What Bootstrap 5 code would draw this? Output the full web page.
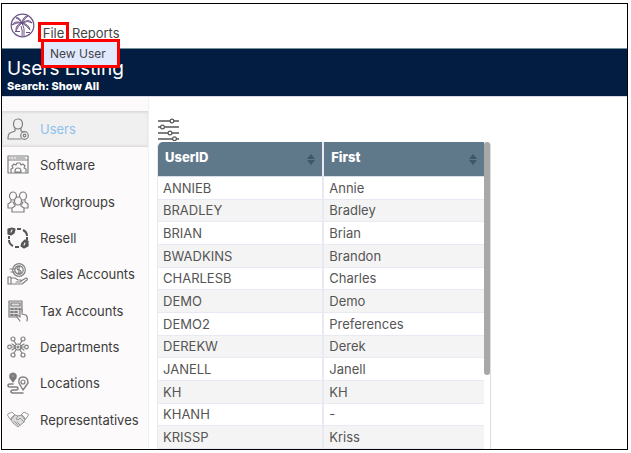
<!DOCTYPE html>
<html lang="en">
<head>
<meta charset="utf-8">
<meta name="viewport" content="width=device-width, initial-scale=1">
<title>Users Listing</title>
<link href="https://cdn.jsdelivr.net/npm/bootstrap@5.3.0/dist/css/bootstrap.min.css" rel="stylesheet">
<style>
body{font-family:Inter,"Open Sans",sans-serif;font-size:13px;line-height:16px;color:#333;background:#fff}
.page-shell{padding:3px 3px 3px 1px}
.app-frame{border:1px solid #000;background:#fff}
.top-bar{height:45px;padding:0 8px;border-bottom:1px solid #78909a}
.brand{margin-top:9px;width:25px;height:25px}
.menu-bar{margin:18px 0 0 3px;gap:3px}
.menu-bar button{font-size:13px;line-height:16px;color:#444;background:none;border:0;padding:3px 0}
.menu-bar .menu-open{border:3px solid #f00;padding:0 1px;height:20px;width:31px;text-align:center}
.file-menu{position:absolute;z-index:5;left:3px;top:17px;width:79px;height:29px;margin:0;padding:0;border:3px solid #f00;background:#e1e9ff}
.file-menu a{display:block;padding:4px 6px;font-size:12px;line-height:16px;color:#444;text-decoration:none;white-space:nowrap}
.title-band{height:48px;padding:10px 6px 0 5px;background:#021d41;color:#fff;border-bottom:1px solid #d5d9e6}
.title-band h1{font-size:19px;line-height:20px;font-weight:400;margin:0}
.title-band p{font-size:11px;line-height:14px;font-weight:800;margin:0}
.side-nav{width:147px;padding:14px 0 11px;background:#fcfafb;border-right:1px solid #f0f1f4}
.side-nav a{color:#3c3c3c;text-decoration:none;padding-left:5px;gap:11px;border-top:1px solid transparent;border-bottom:1px solid transparent}
.side-nav a.active{color:#8fc0ee;background:#f0f0f0;border-color:#ddd;box-shadow:inset 0 1px 2px #ddd,inset 0 -1px 2px #e4e4e4}
.side-nav svg{width:22px;height:22px;flex:none;fill:none;stroke:#808080;stroke-width:1.2;stroke-linecap:round;stroke-linejoin:round}
.side-nav .soft-icon{stroke:#999;stroke-width:1}
.content{padding:18px 8px 0;min-height:0}
.filter-button{border:0;background:none;padding:0;width:24px;height:27px;line-height:0;text-align:left}
.filter-button svg{display:block}
.grid-box{width:334px;max-width:100%;min-height:0;border-radius:5px 4px 0 0;border-left:1px solid #e9e9f3;border-right:1px solid #ddd}
.user-grid{height:100%;margin:0;table-layout:fixed;border-collapse:separate;border-spacing:0;color:#555;font-size:13px}
.user-grid th{height:35px;padding:8px 7px;background:#5f798b;color:#fff;font-weight:800;line-height:14px;vertical-align:top;border-bottom:1px solid #d8deea}
.user-grid th:first-child{width:51%;border-top-left-radius:5px}
.user-grid td{padding:0 5px;line-height:14px;vertical-align:middle;border-bottom:1px solid #e9e9f3}
.user-grid tr>:first-child{border-right:2px solid #e9e9f3}
.user-grid tbody tr:nth-child(even) td{background:#f4f4f4}
.user-grid th svg{margin-top:4px}
.scroll-track{width:6px;flex:none}
.scroll-thumb{height:76%;background:#a8a8a8;border-radius:3px}
</style>
<script src="https://cdn.jsdelivr.net/npm/bootstrap@5.3.0/dist/js/bootstrap.bundle.min.js"></script>
</head>
<body>
<div class="page-shell vh-100">
<div class="app-frame h-100 d-flex flex-column overflow-hidden">
<header class="top-bar d-flex align-items-start flex-shrink-0">
<svg class="brand" viewBox="0 0 25 25" fill="none" stroke="#6a5283" aria-label="Palm logo">
<circle cx="12.500" cy="12.500" r="11.300" stroke-width="1.200"/>
<path d="M12 10Q9 3 6 5Q9 6 12 10Q5 7 2 12Q7 9 12 10Q5 12 6 18Q8 13 12 10Q17 13 20 17Q19 11 12 10Q18 7 22 10Q19 5 12 10Q15 5 18 3Q13 3 12 10" fill="#6a5283" fill-opacity=".45" stroke-width=".9"/>
<path d="M12 10Q15 15 14 23M11 13Q13 18 12 23M5 18.500H10M16 19.500H20" stroke-width="1"/>
</svg>
<nav class="menu-bar d-flex position-relative" aria-label="Main menu">
<button type="button" class="menu-open" aria-expanded="true">File</button>
<button type="button">Reports</button>
<div class="file-menu"><a href="#">New User</a></div>
</nav>
</header>
<div class="title-band flex-shrink-0">
<h1>Users Listing</h1>
<p>Search: Show All</p>
</div>
<div class="d-flex flex-grow-1 overflow-hidden">
<nav class="side-nav d-flex flex-column flex-shrink-0" aria-label="Sections">
<a class="active d-flex align-items-center flex-fill" href="#"><svg viewBox="0 0 22 22"><path d="M11 1C8 1 6.500 3 6.500 6S8 11 11 11s4.500-2 4.500-5S14 1 11 1zM8 11v2l-5 2q-2 1-2 6h13M14 11v2l2 1"/><circle cx="17.500" cy="17.500" r="3.800"/><circle cx="17.500" cy="17.500" r="1.300"/></svg>Users</a>
<a class="d-flex align-items-center flex-fill" href="#"><svg viewBox="0 0 22 22"><path d="M1 2h20v17H1zM1 6h20M3 4h1M6 4h1M9 4h9M4 18v-3l2-1-1-2 2-2 2 1 1-2h3l1 2 2-1 2 2-1 2 2 1v3M8 18v-1q0-3 3-3t3 3v1z"/></svg>Software</a>
<a class="d-flex align-items-center flex-fill" href="#"><svg viewBox="0 0 22 22"><ellipse cx="6" cy="5" rx="3.500" ry="4"/><ellipse cx="16" cy="5" rx="3.500" ry="4"/><ellipse cx="11" cy="10" rx="3.500" ry="4" fill="#fcfafb"/><path d="M4 9v2l-3 2v4h4M18 9v2l3 2v4h-4M8 13v2l-3 2v4h12v-4l-3-2v-2M6 11l1 2M16 11l-1 2"/></svg>Workgroups</a>
<a class="d-flex align-items-center flex-fill" href="#"><svg viewBox="0 0 22 22"><g stroke="#555" stroke-width="2" stroke-linecap="butt"><path d="M10 2h4M16 3q4 2 4 6M20 10v3M12 20H8M6 19q-4-2-4-6M2 12V9"/></g><path d="M1 2l4-1 3 1-1 4-3 2-3-1zM15 16l3-3 3 1v5l-4 2-3-2z" fill="#555" stroke="#555"/><path d="M5 3l-1 2M18 16l-1 2" stroke="#eee"/></svg>Resell</a>
<a class="d-flex align-items-center flex-fill" href="#"><svg viewBox="0 0 22 22"><circle cx="12" cy="7" r="6.300"/><circle cx="12" cy="7" r="4.200"/><path d="M13 4q-3-1-3 1t2 2 2 2-3 1M12 3v8M3 6h5M4 9h5M1 14h3v7H1zM4 15h4l3 2h3q1 2-1 2H9M14 18l5-3q2 0 1 2l-5 4H4"/></svg>Sales Accounts</a>
<a class="d-flex align-items-center flex-fill" href="#"><svg viewBox="0 0 22 22"><path d="M11 17H2V1h13v10" fill="#ddd"/><path d="M4 3h9v3H4z"/><path d="M4 9h2M8 9h2M12 9h1M4 12h2M8 12h2M4 15h2M8 15h2" stroke-width="1.800"/><path d="M13 21l-3-4q0-2 2-1l1 1v-7q1-2 2 0v4l4 1q2 2 1 6" fill="#fcfafb"/></svg>Tax Accounts</a>
<a class="d-flex align-items-center flex-fill" href="#"><svg viewBox="0 0 22 22"><circle cx="11" cy="11" r="3"/><circle cx="11" cy="11" r="1"/><circle cx="6" cy="3" r="2"/><circle cx="16" cy="3" r="2"/><circle cx="2.500" cy="11" r="1.800"/><circle cx="19.500" cy="11" r="1.800"/><circle cx="6" cy="19" r="2"/><circle cx="16" cy="19" r="2"/><path d="M7 5l2 3M15 5l-2 3M4.500 11H8M14 11h3.500M9 14l-2 3M13 14l2 3M5 8l3 2M17 8l-3 2M5 14l3-2M17 14l-3-2"/></svg>Departments</a>
<a class="d-flex align-items-center flex-fill" href="#"><svg viewBox="0 0 22 22"><path d="M6 10L3 6q-1-5 3-5t3 5z" fill="#777"/><circle cx="6" cy="4" r="1.200" fill="#ddd"/><path d="M16 18l-4-7q-1-6 4-6t5 6z" stroke-width="1.400"/><circle cx="16" cy="10" r="2"/><path d="M6 12H3q-2 0-2 1.500T3 15h6q2 0 2 1.500T9 18H6q-2 0-2 1.500T6 21h10" stroke-width="1.500"/></svg>Locations</a>
<a class="d-flex align-items-center flex-fill" href="#"><svg class="soft-icon" viewBox="0 0 22 22"><path d="M5 8l3-2 3 1 4-1 3 3-1 4-6 5-5-4-2-3z" fill="#ddd"/><path d="M1 5l4-2 3 3-4 5-3-4zM21 5l-4-2-3 3 4 5 3-4zM11 7l-2 3 2 1 2-2 4 4M10 13l3 3M7 12l4 4"/></svg>Representatives</a>
</nav>
<main class="content d-flex flex-column flex-grow-1">
<button type="button" class="filter-button flex-shrink-0" aria-label="Filter options"><svg width="24" height="25" viewBox="0 0 24 25" fill="#fff" stroke="#555" stroke-width="1.200"><path d="M1 5h21M1 11h21M1 17h21M1 23h21" stroke-width="1.600"/><circle cx="15" cy="5" r="1.900"/><circle cx="5.500" cy="11" r="1.900"/><circle cx="13" cy="17" r="1.900"/><circle cx="17.500" cy="22.800" r="1.900"/></svg></button>
<div class="grid-box d-flex flex-grow-1">
<div class="flex-grow-1">
<table class="user-grid w-100">
<thead><tr>
<th scope="col"><div class="d-flex justify-content-between"><span>UserID</span><svg width="8" height="11" viewBox="0 0 8 11" fill="#40566a"><path d="M4 0l4 5H0zM4 11l4-5H0z"/></svg></div></th>
<th scope="col"><div class="d-flex justify-content-between"><span>First</span><svg width="8" height="11" viewBox="0 0 8 11" fill="#40566a"><path d="M4 0l4 5H0zM4 11l4-5H0z"/></svg></div></th>
</tr></thead>
<tbody>
<tr><td>ANNIEB</td><td>Annie</td></tr>
<tr><td>BRADLEY</td><td>Bradley</td></tr>
<tr><td>BRIAN</td><td>Brian</td></tr>
<tr><td>BWADKINS</td><td>Brandon</td></tr>
<tr><td>CHARLESB</td><td>Charles</td></tr>
<tr><td>DEMO</td><td>Demo</td></tr>
<tr><td>DEMO2</td><td>Preferences</td></tr>
<tr><td>DEREKW</td><td>Derek</td></tr>
<tr><td>JANELL</td><td>Janell</td></tr>
<tr><td>KH</td><td>KH</td></tr>
<tr><td>KHANH</td><td>-</td></tr>
<tr><td>KRISSP</td><td>Kriss</td></tr>
</tbody>
</table>
</div>
<div class="scroll-track"><div class="scroll-thumb"></div></div>
</div>
</main>
</div>
</div>
</div>
</body>
</html>
